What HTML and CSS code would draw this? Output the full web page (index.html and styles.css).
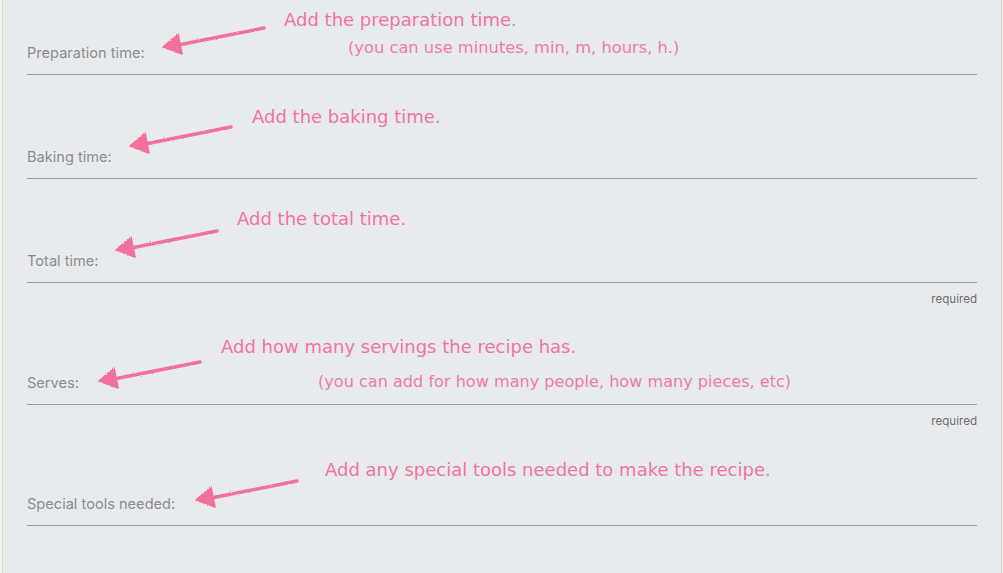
FILE: index.html
```html
<!DOCTYPE html>
<html lang="en">
<head>
<meta charset="utf-8">
<title>Recipe times</title>
<link rel="stylesheet" href="styles.css">
</head>
<body>
<svg class="defs" width="0" height="0" aria-hidden="true">
  <defs>
    <filter id="rough" x="-10%" y="-30%" width="120%" height="160%">
      <feTurbulence type="fractalNoise" baseFrequency="0.9" numOctaves="2" seed="3" result="n"/>
      <feDisplacementMap in="SourceGraphic" in2="n" scale="2.2"/>
    </filter>
    <symbol id="arrow" viewBox="0 0 106 32">
      <g filter="url(#rough)" fill="#f2709c" stroke="#f2709c" stroke-linecap="round" stroke-linejoin="round">
        <path d="M103 3 L17 20" stroke-width="3.4" fill="none"/>
        <path d="M2 22 L17 9 L21 29 Z" stroke-width="1.6"/>
      </g>
    </symbol>
  </defs>
</svg>
<div class="frame">
  <form class="form">
    <div class="field">
      <label class="label">Preparation time:</label>
      <svg class="arrow arrow-prep"><use href="#arrow"/></svg>
      <p class="note note-prep">Add the preparation time.</p>
      <p class="hint hint-prep">(you can use minutes, min, m, hours, h.)</p>
    </div>
    <div class="field">
      <label class="label">Baking time:</label>
      <svg class="arrow arrow-bake"><use href="#arrow"/></svg>
      <p class="note note-bake">Add the baking time.</p>
    </div>
    <div class="field">
      <label class="label">Total time:</label>
      <svg class="arrow arrow-total"><use href="#arrow"/></svg>
      <p class="note note-total">Add the total time.</p>
    </div>
    <div class="required">required</div>
    <div class="field">
      <label class="label">Serves:</label>
      <svg class="arrow arrow-serves"><use href="#arrow"/></svg>
      <p class="note note-serves">Add how many servings the recipe has.</p>
      <p class="hint hint-serves">(you can add for how many people, how many pieces, etc)</p>
    </div>
    <div class="required">required</div>
    <div class="field">
      <label class="label">Special tools needed:</label>
      <svg class="arrow arrow-tools"><use href="#arrow"/></svg>
      <p class="note note-tools">Add any special tools needed to make the recipe.</p>
    </div>
  </form>
</div>
</body>
</html>
```
FILE: styles.css
```css
html, body {
  margin: 0;
  padding: 0;
  height: 100%;
  overflow: hidden;
}
body {
  background: #f3f2ee;
}
.defs {
  position: absolute;
  width: 0;
  height: 0;
}
.frame {
  margin-left: 2px;
  width: 998px;
  height: 573px;
  background: #e8ebee;
  border-left: 1px solid #dcd8cb;
  border-right: 1px solid #d2d2d2;
  overflow: hidden;
}
.form {
  margin: -29px 0 0 0;
  padding: 0 24px 0 24px;
  display: flex;
  flex-direction: column;
}
.field {
  position: relative;
  border-bottom: 1px solid #9a9a9a;
  display: flex;
  flex-direction: column;
  justify-content: flex-end;
  padding-bottom: 11px;
  box-sizing: content-box;
  height: 92px;
}
.label {
  font-family: "Inter", "Liberation Sans", sans-serif;
  font-size: 14.6px;
  line-height: 20px;
  color: #8c8c8c;
}
.required {
  height: 17.5px;
  box-sizing: border-box;
  padding-top: 9px;
  text-align: right;
  font-family: "Inter", "Liberation Sans", sans-serif;
  font-size: 11.6px;
  line-height: 14px;
  color: #6e6e6e;
}
.arrow {
  position: absolute;
  width: 106px;
  height: 32px;
  overflow: visible;
}
.note, .hint {
  position: absolute;
  margin: 0;
  font-family: "DejaVu Sans", Verdana, sans-serif;
  color: #f5739e;
  white-space: nowrap;
}
.note {
  font-size: 18px;
  line-height: 22px;
}
.hint {
  font-size: 16.1px;
  line-height: 20px;
  color: #f47aa2;
}
.arrow-prep { left: 134px; top: 54px; }
.note-prep { left: 257px; top: 38px; }
.hint-prep { left: 321px; top: 67px; font-size: 16.3px; }

.arrow-bake { left: 101px; top: 49px; }
.note-bake { left: 225px; top: 31px; }

.arrow-total { left: 87px; top: 49px; }
.note-total { left: 210px; top: 29px; }

.arrow-serves { left: 70px; top: 58px; }
.note-serves { left: 194px; top: 35px; }
.hint-serves { left: 291px; top: 71px; }

.arrow-tools { left: 167px; top: 56px; }
.note-tools { left: 298px; top: 37px; }
```
